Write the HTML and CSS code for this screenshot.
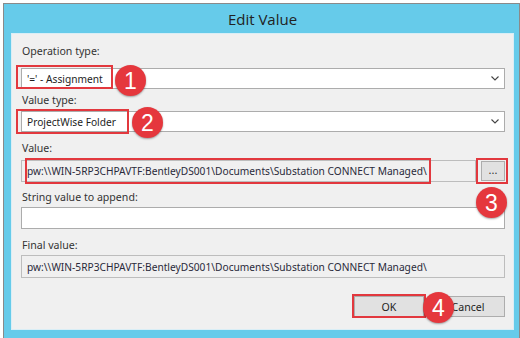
FILE: index.html
```html
<!DOCTYPE html>
<html lang="en">
<head>
    <meta charset="UTF-8">
    <title>Edit Value</title>
    <link rel="stylesheet" href="styles.css">
</head>
<body>
    <div class="dialog">
        <div class="titlebar">Edit Value</div>
        <div class="panel">
            <div class="group g1">
                <label class="lbl">Operation type:</label>
                <div class="combo">
                    <span>'=' - Assignment</span>
                    <svg class="chev" width="8" height="5" viewBox="0 0 8 5"><path d="M0.5 0.5 L4 4 L7.5 0.5" fill="none" stroke="#444" stroke-width="1.1"/></svg>
                </div>
            </div>
            <div class="group g2">
                <label class="lbl">Value type:</label>
                <div class="combo">
                    <span>ProjectWise Folder</span>
                    <svg class="chev" width="8" height="5" viewBox="0 0 8 5"><path d="M0.5 0.5 L4 4 L7.5 0.5" fill="none" stroke="#444" stroke-width="1.1"/></svg>
                </div>
            </div>
            <div class="group g3">
                <label class="lbl">Value:</label>
                <div class="row">
                    <div class="field readonly">pw:\\WIN-5RP3CHPAVTF:BentleyDS001\Documents\Substation CONNECT Managed\</div>
                    <button class="browse">...</button>
                </div>
            </div>
            <div class="group g4">
                <label class="lbl">String value to append:</label>
                <div class="field"></div>
            </div>
            <div class="group g5">
                <label class="lbl">Final value:</label>
                <div class="field readonly">pw:\\WIN-5RP3CHPAVTF:BentleyDS001\Documents\Substation CONNECT Managed\</div>
            </div>
            <div class="buttons">
                <button class="btn">OK</button>
                <button class="btn">Cancel</button>
            </div>

            <!-- callouts -->
            <div class="hl hl1"></div>
            <div class="hl hl2"></div>
            <div class="hl hl3"></div>
            <div class="hl hl4"></div>
            <div class="hl hl5"></div>
            <div class="num n1">1</div>
            <div class="num n2">2</div>
            <div class="num n3">3</div>
            <div class="num n4">4</div>
        </div>
    </div>
</body>
</html>
```

FILE: styles.css
```css
body {
    margin: 0;
    background-color: #fff;
    font-family: "Noto Sans", "Open Sans", sans-serif;
    font-size: 10.2px;
    color: #1e1e1e;
}

.dialog {
    margin: 3px 0 0 3px;
    width: 503px;
    padding: 0 5px 8px 7px;
    background-color: #66cbea;
    border: 1px solid #8a8a8a;
}

.titlebar {
    height: 29px;
    line-height: 30px;
    text-align: center;
    font-family: "Open Sans", sans-serif;
    font-size: 15px;
    color: #222;
}

.panel {
    position: relative;
    height: 285px;
    padding: 10px 8px 0 9px;
    background-color: #f0f0f0;
    border: 1px solid #d9eef6;
}

.lbl {
    display: block;
    height: 14px;
    line-height: 14px;
    padding-left: 1px;
    font-size: 10.6px;
    color: #333;
}

.combo, .field {
    box-sizing: border-box;
    display: flex;
    align-items: center;
    padding: 0 5px;
    background-color: #fff;
    border: 1px solid #acacac;
    white-space: nowrap;
}

.combo {
    height: 21px;
    justify-content: space-between;
    padding-right: 5px;
}

.field {
    height: 22px;
}

.field.readonly {
    background-color: #f0f0f0;
    border-color: #bdbdbd;
    color: #2a2a3a;
}

.row {
    display: flex;
    gap: 5px;
}

.row .field {
    flex: 1;
}

.browse {
    width: 24px;
    height: 20px;
    margin-top: 1px;
    padding: 0 0 5px;
    background-color: #e1e1e1;
    border: 1px solid #adadad;
    font-family: inherit;
    font-size: 11px;
    color: #333;
}

.g1 .combo { margin-top: 10px; }
.g2 { margin-top: 4px; }
.g2 .combo { margin-top: 4px; }
.g3 { margin-top: 9px; }
.g3 .row { margin-top: 5px; }
.g4 { margin-top: 8px; }
.g4 .field { margin-top: 3px; background-color: #fff; }
.g5 { margin-top: 9px; }
.g5 .field { margin-top: 3px; height: 23px; }

.buttons {
    display: flex;
    justify-content: flex-end;
    gap: 6px;
    margin-top: 18px;
}

.btn {
    width: 74px;
    height: 21px;
    padding: 0;
    background-color: #e1e1e1;
    border: 1px solid #adadad;
    font-family: inherit;
    font-size: 10.6px;
    color: #1e1e1e;
}

.buttons .btn:first-child {
    width: 70px;
    margin-right: 1px;
}

/* annotation overlays */
.hl {
    position: absolute;
    box-sizing: border-box;
    border: 2px solid #e2383e;
}

.hl1 { left: 4px; top: 31px; width: 97px; height: 24px; }
.hl2 { left: 4px; top: 75px; width: 113px; height: 25px; }
.hl3 { left: 13px; top: 124px; width: 406px; height: 26px; }
.hl4 { left: 464px; top: 124px; width: 32px; height: 26px; }
.hl5 { left: 340px; top: 260px; width: 74px; height: 24px; }

.num {
    position: absolute;
    width: 31px;
    height: 31px;
    border-radius: 50%;
    background-color: #e5373d;
    box-shadow: 0 1px 2px rgba(0,0,0,0.35);
    color: #fff;
    font-family: "Liberation Sans", Arial, sans-serif;
    font-size: 23px;
    line-height: 32px;
    text-align: center;
}

.n1 { left: 103px; top: 31px; }
.n2 { left: 120px; top: 73px; }
.n3 { left: 464px; top: 153px; }
.n4 { left: 411px; top: 258px; }
```
